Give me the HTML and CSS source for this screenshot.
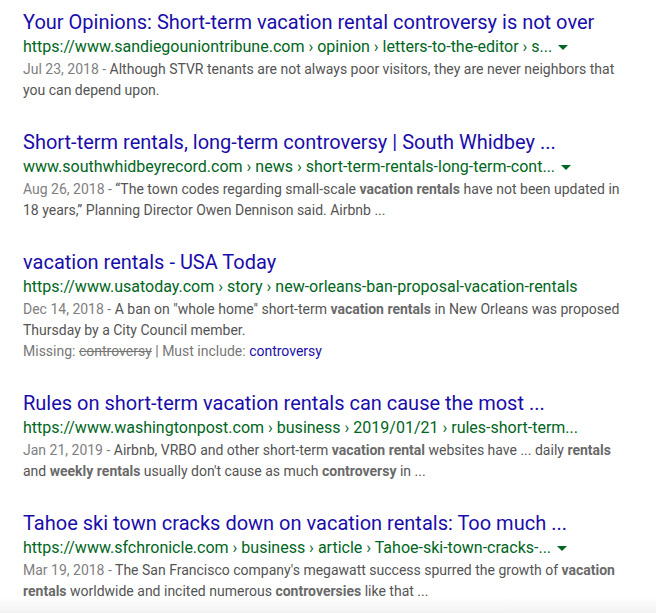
FILE: index.html
```html
<!DOCTYPE html>
<html lang="en">

<head>
    <meta charset="UTF-8">
    <meta name="viewport" content="width=device-width, initial-scale=1.0">
    <title>vacation rentals controversy - Search</title>
    <link rel="stylesheet" href="styles.css">
</head>

<body>

    <div class="results">
        <div class="result">
            <a class="title" href="#">Your Opinions: Short-term vacation rental controversy is not over</a>
            <div class="url">https://www.sandiegouniontribune.com › opinion › letters-to-the-editor › s... <span class="arrow"></span></div>
            <p class="snippet"><span class="date">Jul 23, 2018 -</span> Although STVR tenants are not always poor visitors, they are never neighbors that you can depend upon.</p>
        </div>

        <div class="result">
            <a class="title" href="#">Short-term rentals, long-term controversy | South Whidbey ...</a>
            <div class="url">www.southwhidbeyrecord.com › news › short-term-rentals-long-term-cont... <span class="arrow"></span></div>
            <p class="snippet"><span class="date">Aug 26, 2018 -</span> “The town codes regarding small-scale <b>vacation rentals</b> have not been updated in 18 years,” Planning Director Owen Dennison said. Airbnb ...</p>
        </div>

        <div class="result">
            <a class="title" href="#">vacation rentals - USA Today</a>
            <div class="url">https://www.usatoday.com › story › new-orleans-ban-proposal-vacation-rentals</div>
            <p class="snippet"><span class="date">Dec 14, 2018 -</span> A ban on "whole home" short-term <b>vacation rentals</b> in New Orleans was proposed Thursday by a City Council member.</p>
            <p class="missing">Missing: <s>controversy</s> | Must include: <a href="#">controversy</a></p>
        </div>

        <div class="result">
            <a class="title" href="#">Rules on short-term vacation rentals can cause the most ...</a>
            <div class="url">https://www.washingtonpost.com › business › 2019/01/21 › rules-short-term...</div>
            <p class="snippet"><span class="date">Jan 21, 2019 -</span> Airbnb, VRBO and other short-term <b>vacation rental</b> websites have ... daily <b>rentals</b> and <b>weekly rentals</b> usually don't cause as much <b>controversy</b> in ...</p>
        </div>

        <div class="result">
            <a class="title" href="#">Tahoe ski town cracks down on vacation rentals: Too much ...</a>
            <div class="url">https://www.sfchronicle.com › business › article › Tahoe-ski-town-cracks-... <span class="arrow"></span></div>
            <p class="snippet"><span class="date">Mar 19, 2018 -</span> The San Francisco company's megawatt success spurred the growth of <b>vacation rentals</b> worldwide and incited numerous <b>controversies</b> like that ...</p>
        </div>
    </div>

    <div class="fade"></div>

</body>

</html>
```

FILE: styles.css
```css
body {
    margin: 0;
    padding: 9px 0 0 23px;
    font-family: Roboto, "Liberation Sans", sans-serif;
    background: #fff;
    overflow: hidden;
}

.results {
    width: 600px;
}

.result {
    margin-bottom: 28px;
}

.title {
    display: block;
    font-size: 20px;
    line-height: 26px;
    color: #1a0dab;
    text-decoration: none;
    white-space: nowrap;
}

.url {
    font-size: 16px;
    line-height: 24px;
    color: #006621;
    white-space: nowrap;
}

.arrow {
    display: inline-block;
    margin-left: 2px;
    border-left: 5px solid transparent;
    border-right: 5px solid transparent;
    border-top: 5px solid #006621;
    vertical-align: middle;
}

.snippet,
.missing {
    margin: 0;
    font-size: 14px;
    line-height: 21px;
    color: #545454;
}

.snippet b {
    color: #6a6a6a;
}

.date {
    color: #808080;
}

.missing {
    color: #777;
}

.missing a {
    color: #1a0dab;
    text-decoration: none;
}

.fade {
    position: fixed;
    left: 0;
    right: 0;
    bottom: 0;
    height: 16px;
    background: linear-gradient(rgba(243, 243, 243, 0), #f2f2f2);
}
```
